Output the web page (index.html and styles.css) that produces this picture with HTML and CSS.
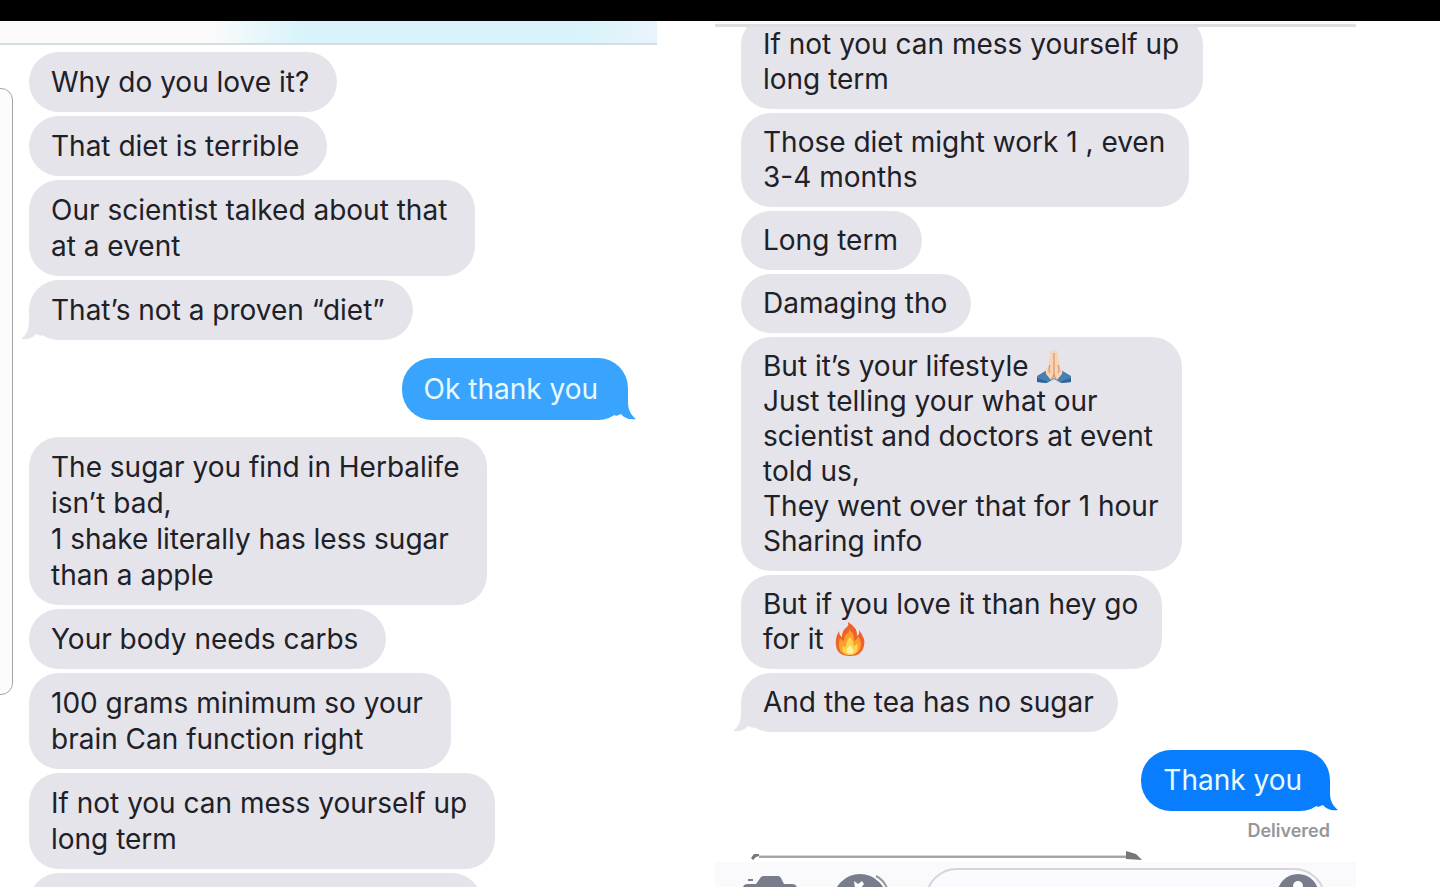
FILE: index.html
```
<!DOCTYPE html>
<html lang="en">
<head>
<meta charset="utf-8">
<meta name="viewport" content="width=device-width, initial-scale=1">
<title>Messages</title>
<link rel="stylesheet" href="styles.css">
</head>
<body>
<div class="top-bar"></div>
<main class="screens">
  <section class="screen screen-left" aria-label="Conversation, first part">
    <header class="header"></header>
    <div class="edge-panel"></div>
    <div class="thread">
      <p class="bubble">Why do you love it?</p>
      <p class="bubble">That diet is terrible</p>
      <p class="bubble">Our scientist talked about that<br>at a event</p>
      <p class="bubble">That’s not a proven “diet”<svg class="tail" viewBox="0 0 28 30" aria-hidden="true"><path d="M8 0V12C8 20 5 25 0 29C7 30 12 28 15 24L20 26L28 20V0Z"/></svg></p>
      <p class="bubble sent light">Ok thank you<svg class="tail" viewBox="0 0 28 30" aria-hidden="true"><path d="M20 0V12C20 20 23 25 28 29C21 30 16 28 13 24L8 26L0 20V0Z"/></svg></p>
      <p class="bubble">The sugar you find in Herbalife<br>isn’t bad,<br>1 shake literally has less sugar<br>than a apple</p>
      <p class="bubble">Your body needs carbs</p>
      <p class="bubble">100 grams minimum so your<br>brain Can function right</p>
      <p class="bubble">If not you can mess yourself up<br>long term</p>
      <div class="bubble partial"></div>
    </div>
  </section>
  <section class="screen screen-right" aria-label="Conversation, second part">
    <div class="thread">
      <p class="bubble">If not you can mess yourself up<br>long term</p>
      <p class="bubble">Those diet might work 1 , even<br>3-4 months</p>
      <p class="bubble">Long term</p>
      <p class="bubble">Damaging tho</p>
      <p class="bubble">But it’s your lifestyle <svg class="emoji" viewBox="0 0 36 36" role="img" aria-label="Folded hands"><path fill="#477fae" d="M1 28L11 22L18 31L11 35L1 34ZM35 28L25 22L18 31L25 35L35 34Z"/><path fill="#2e639a" d="M1 30L10 33L11 35L1 34ZM35 30L26 33L25 35L35 34Z"/><path fill="#f9d3b4" d="M17 2Q14 2 14 7L12 18Q9 22 10 26L15 32Q18 30 18 25Q18 30 21 32L26 26Q27 22 24 18L22 7Q22 2 19 2L18 7Z"/><path fill="none" stroke="#d79b78" stroke-width="1.3" d="M18 5V24Q18 29 15 32M18 24Q18 29 21 32M14 17Q12 22 14 25M22 17Q24 22 22 25"/></svg><br>Just telling your what our<br>scientist and doctors at event<br>told us,<br>They went over that for 1 hour<br>Sharing info</p>
      <p class="bubble">But if you love it than hey go<br>for it <svg class="emoji" viewBox="0 0 36 36" role="img" aria-label="Fire"><path fill="#ed6329" d="M16 1Q26 7 25 15Q28 13 27 9Q34 18 32 25Q30 35 18 35Q5 35 4 24Q3 17 7 10Q7 14 10 16Q10 9 15 6Q17 4 16 1Z"/><path fill="#ff9d2e" d="M17 8Q23 14 22 20Q26 18 26 15Q31 23 28 28Q25 34 18 34Q8 34 7 26Q6 21 8 17Q10 20 12 20Q12 14 16 12Q18 10 17 8Z"/><path fill="#ffd34f" d="M18 16Q23 22 21 25Q24 25 25 22Q28 33 18 34Q8 33 11 24Q12 26 14 26Q14 20 18 16Z"/><path fill="#fff0a0" d="M18 24Q25 32 18 33Q11 32 18 24Z"/></svg></p>
      <p class="bubble">And the tea has no sugar<svg class="tail" viewBox="0 0 28 30" aria-hidden="true"><path d="M8 0V12C8 20 5 25 0 29C7 30 12 28 15 24L20 26L28 20V0Z"/></svg></p>
      <p class="bubble sent">Thank you<svg class="tail" viewBox="0 0 28 30" aria-hidden="true"><path d="M20 0V12C20 20 23 25 28 29C21 30 16 28 13 24L8 26L0 20V0Z"/></svg></p>
      <p class="status">Delivered</p>
    </div>
    <div class="rule-top"></div>
    <div class="marker" aria-hidden="true">
      <svg class="marker-start" viewBox="0 0 8 10"><path d="M0 7L3 3H8V5L5 6L2 9Z"/></svg>
      <span class="marker-line"></span>
      <svg class="marker-end" viewBox="0 0 16 10"><path d="M0 0L10 3L16 9L0 8Z"/></svg>
    </div>
    <footer class="composer">
      <button class="icon-button camera" type="button" aria-label="Camera"><svg viewBox="0 0 56 42"><path d="M0 12Q0 8 5 8H13L18 1Q19 0 21 0H35Q37 0 38 2L41 8H49Q54 8 54 13V38Q54 42 49 42H5Q0 42 0 38Z"/><rect x="5" y="3" width="5" height="2"/></svg></button>
      <button class="icon-button apps" type="button" aria-label="Apps"><svg viewBox="0 0 58 54"><circle cx="27" cy="27" r="27"/><path fill="none" stroke="#929b99" stroke-width="2" d="M43 2Q51 6 55 16"/><path fill="#fff" d="M21 7L25 10L29 7L31 10L28 14L38 36H32L25 20L18 36H12L22 14Z"/></svg></button>
      <div class="field">
        <input class="message-input" type="text" aria-label="Message">
        <button class="icon-button mic" type="button" aria-label="Record audio"><svg viewBox="0 0 42 42"><circle cx="21" cy="21" r="21"/><rect fill="#fff" x="16" y="7" width="10" height="20" rx="5"/></svg></button>
      </div>
    </footer>
  </section>
</main>
</body>
</html>
```
FILE: styles.css
```
* { box-sizing: border-box; }

body {
  margin: 0;
  height: 100vh;
  display: flex;
  flex-direction: column;
  overflow: hidden;
  background: #fff;
  color: #202027;
  font-family: Inter, "Liberation Sans", sans-serif;
}

p { margin: 0; }
button, input { font: inherit; border: 0; padding: 0; background: none; }

.top-bar { flex: 0 0 21px; background: #000; }

.screens {
  flex: 1;
  min-height: 0;
  overflow: hidden;
  display: grid;
  grid-template-columns: 657fr 58fr 641fr 84fr;
}

.screen { position: relative; min-width: 0; min-height: 0; overflow: hidden; }
.screen-left { grid-column: 1; }
.screen-right { grid-column: 3; }

.header {
  height: 24px;
  border-bottom: 2px solid #d4dde0;
  background: linear-gradient(90deg, #fbfbfb 0 32%, #d8f3fa 46% 88%, #e9f4fb);
}

.edge-panel {
  position: absolute;
  left: -12px;
  top: 67px;
  width: 25px;
  height: 607px;
  border: 1px solid #a5a5a5;
  border-radius: 12px;
  background: #fcfcfc;
}

.thread {
  display: flex;
  flex-direction: column;
  align-items: flex-start;
  gap: 4px;
  font-size: 28px;
}

.screen-left .thread { padding: 7px 29px 0; line-height: 36px; }
.screen-right .thread { margin-top: -6px; padding: 0 26px; line-height: 35px; }

.bubble {
  position: relative;
  padding: 12px 28px 12px 22px;
  border-radius: 30px;
  background: #e5e4eb;
  white-space: nowrap;
}

.screen-right .bubble { padding-right: 24px; }
.partial { width: 453px; height: 60px; }

.bubble.sent {
  align-self: flex-end;
  margin-top: 14px;
  padding: 13px 28px 13px 22px;
  background: #087efe;
  color: #e9faff;
}
.bubble.light {
  margin-bottom: 13px;
  padding-right: 30px;
  background: #39a4fd;
}

.tail {
  position: absolute;
  left: -8px;
  bottom: 0;
  width: 28px;
  height: 30px;
  fill: #e5e4eb;
}
.sent .tail { left: auto; right: -8px; fill: #087efe; }
.light .tail { fill: #39a4fd; }

.emoji { width: 36px; height: 36px; margin: -4px 0; vertical-align: -4px; }

.status {
  align-self: flex-end;
  margin-top: 5px;
  color: #96969b;
  font-size: 18px;
  font-weight: 600;
  line-height: 22px;
}

.rule-top {
  position: absolute;
  top: 0;
  left: 0;
  right: 0;
  height: 6px;
  border-top: 3px solid #fafafa;
  border-bottom: 3px solid #dedee0;
}

.marker { display: flex; align-items: center; padding: 9px 214px 0 36px; fill: #777; }
.marker-start { width: 8px; height: 10px; }
.marker-line { flex: 1; height: 3px; background: #aaa2a4; border-top: 1px solid #dfd1d4; }
.marker-end { width: 16px; height: 10px; }

.composer {
  display: flex;
  align-items: flex-start;
  margin-top: 1px;
  padding: 6px 30px 0 28px;
  background: #fafafc;
}

.icon-button { display: block; flex: none; fill: #777d8b; }
.icon-button svg { display: block; width: 100%; height: 100%; }
.camera { width: 56px; height: 42px; margin-top: 8px; }
.apps { width: 58px; height: 54px; margin: 6px 0 0 34px; }
.field {
  flex: 1;
  min-width: 0;
  display: flex;
  margin-left: 34px;
  height: 64px;
  padding: 4px 5px;
  border: 2px solid #d6d6da;
  border-radius: 32px;
  background: #fbfaff;
}
.message-input { flex: 1; min-width: 0; }
.mic { width: 42px; height: 42px; }
```
